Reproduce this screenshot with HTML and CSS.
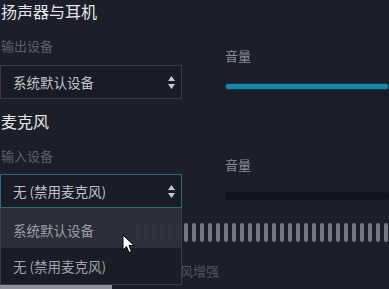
FILE: index.html
```html
<!DOCTYPE html>
<html lang="zh-CN">
<head>
<meta charset="utf-8">
<link rel="stylesheet" href="styles.css">
</head>
<body>
<div class="page">
  <h2 class="title">扬声器与耳机</h2>
  <div class="row">
    <div class="col-left">
      <div class="label">输出设备</div>
      <div class="select">
        <span>系统默认设备</span>
        <svg class="arrows" width="7" height="13" viewBox="0 0 7 13"><path d="M3.5 0 L7 5 L0 5 Z M0 8 L7 8 L3.5 13 Z" fill="#c9c9cb"/></svg>
      </div>
    </div>
    <div class="col-right">
      <div class="vol-label">音量</div>
      <div class="slider slider-on"></div>
    </div>
  </div>

  <h2 class="title title-mic">麦克风</h2>
  <div class="row">
    <div class="col-left">
      <div class="label label-mic">输入设备</div>
      <div class="select select-focus">
        <span>无 (禁用麦克风)</span>
        <svg class="arrows" width="7" height="13" viewBox="0 0 7 13"><path d="M3.5 0 L7 5 L0 5 Z M0 8 L7 8 L3.5 13 Z" fill="#c9c9cb"/></svg>
      </div>
    </div>
    <div class="col-right">
      <div class="vol-label vol-label-mic">音量</div>
      <div class="slider slider-off"></div>
    </div>
  </div>

  <div class="meter">
    <span></span><span></span><span></span><span></span><span></span><span></span><span></span><span></span>
    <span></span><span></span><span></span><span></span><span></span><span></span><span></span><span></span>
    <span></span><span></span><span></span><span></span><span></span><span></span><span></span><span></span>
    <span></span><span></span><span></span><span></span><span></span><span></span><span></span><span></span>
  </div>
  <div class="enh">麦克风增强</div>
  <div class="toggle-bar"></div>

  <ul class="dropdown">
    <li class="item item-hover">系统默认设备</li>
    <li class="item">无 (禁用麦克风)</li>
  </ul>

  <svg class="cursor" width="14" height="20" viewBox="0 0 14 20">
    <path d="M1 1 L1 16 L4.5 12.5 L7 18.5 L9.5 17.5 L7 11.5 L12 11.5 Z" fill="#ffffff" stroke="#000000" stroke-width="1" stroke-linejoin="round"/>
  </svg>
</div>
</body>
</html>
```

FILE: styles.css
```css
* {
  box-sizing: border-box;
}

html, body {
  margin: 0;
  padding: 0;
  background: #1c1f29;
}

body {
  width: 389px;
  height: 289px;
  overflow: hidden;
  font-family: "Noto Sans CJK SC", "Noto Sans", sans-serif;
}

.page {
  position: relative;
  height: 289px;
  overflow: hidden;
}

.title {
  margin: 0;
  padding-left: 1px;
  font-size: 16px;
  line-height: 22px;
  font-weight: 400;
  color: #e6e6e8;
}

.title-mic {
  margin-top: 11px;
}

.row {
  display: grid;
  grid-template-columns: 182px 1fr;
  column-gap: 43px;
}

.col-left,
.col-right {
  display: flex;
  flex-direction: column;
}

.label {
  margin-top: 15px;
  padding-left: 1px;
  font-size: 13px;
  line-height: 18px;
  color: #5b5f6a;
}

.select {
  margin-top: 10px;
  height: 34px;
  border: 1px solid #363a45;
  background: #191c25;
  display: flex;
  align-items: center;
  justify-content: space-between;
  padding: 0 6px 0 12px;
  font-size: 13.5px;
  color: #c3c3c6;
}

.label-mic + .select {
  margin-top: 9px;
}

.select-focus {
  border-color: #2a6a7b;
}

.arrows {
  display: block;
}

.vol-label {
  margin-top: 25px;
  font-size: 13px;
  line-height: 18px;
  color: #8b8e95;
}

.vol-label-mic {
  margin-top: 24px;
}

.slider {
  margin-top: 18px;
  height: 7px;
  border-radius: 3px;
}

.slider-on {
  background: #1888a7;
  border: 1px solid #0b3a4c;
}

.slider-off {
  height: 8px;
  background: #12141b;
  border-radius: 2px;
}

.meter {
  margin-top: 15px;
  padding-left: 136px;
  height: 19px;
  display: flex;
  gap: 4px;
}

.meter span {
  flex: none;
  width: 4px;
  height: 19px;
  border-radius: 2px;
  background: #74777e;
}

.enh {
  margin-top: 20px;
  padding-left: 154px;
  font-size: 13px;
  line-height: 18px;
  color: #50545f;
}

.toggle-bar {
  margin-top: 5px;
  width: 112px;
  height: 6px;
  background: #8e9096;
}

.dropdown {
  position: absolute;
  left: 0;
  top: 208px;
  width: 182px;
  height: 77px;
  margin: 0;
  padding: 0;
  list-style: none;
  border: 1px solid #393c46;
  border-top: none;
  display: flex;
  flex-direction: column;
}

.item {
  flex: 1;
  display: flex;
  align-items: center;
  padding-left: 12px;
  font-size: 13.5px;
  color: #a2a3a8;
  background: rgba(27, 29, 37, 0.97);
}

.item-hover {
  flex: 0 0 40px;
  padding-top: 3px;
  background: rgba(44, 47, 56, 0.95);
  color: #9c9ea3;
}

.cursor {
  position: absolute;
  left: 122px;
  top: 234px;
}
```
